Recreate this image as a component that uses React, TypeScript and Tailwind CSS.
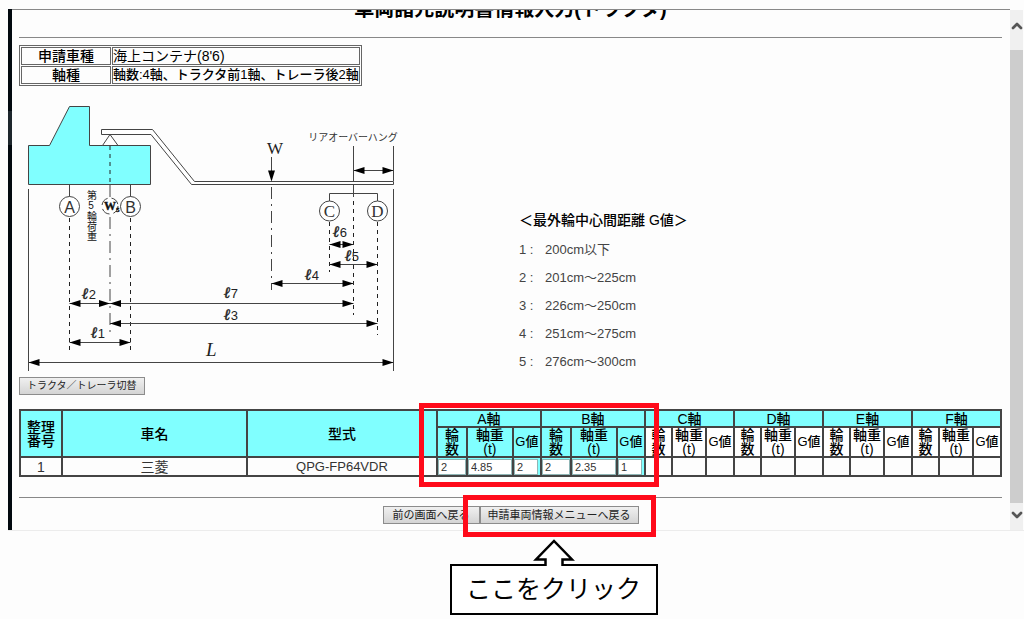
import { ChevronDown, ChevronUp } from "lucide-react";

const axles = [
  { name: "A", wheels: "2", weight: "4.85", g: "2", active: true },
  { name: "B", wheels: "2", weight: "2.35", g: "1", active: true },
  { name: "C", active: false },
  { name: "D", active: false },
  { name: "E", active: false },
  { name: "F", active: false },
];

const gValues = [
  { no: "1", range: "200cm以下" },
  { no: "2", range: "201cm～225cm" },
  { no: "3", range: "226cm～250cm" },
  { no: "4", range: "251cm～275cm" },
  { no: "5", range: "276cm～300cm" },
];

const buttonClass =
  "h-[18px] border border-[#8c8c8c] bg-gradient-to-b from-[#f0f0f0] to-[#d4d4d4] leading-none text-[#222] whitespace-nowrap";

// Horizontal dimension line with an arrowhead at both ends
function Dimension({ x1, x2, y }: { x1: number; x2: number; y: number }) {
  return (
    <g>
      <path d={`M${x1} ${y}H${x2}`} stroke="#444" />
      <path d={`M${x1} ${y}l11 -3.5v7zM${x2} ${y}l-11 -3.5v7z`} fill="#000" stroke="none" />
    </g>
  );
}

function Length({ x, y, n }: { x: number; y: number; n: string }) {
  return (
    <text x={x} y={y} fill="#222" stroke="none">
      <tspan fontFamily="DejaVu Serif, serif" fontStyle="italic" fontWeight="bold" fontSize="16" stroke="#222" strokeWidth="0.4">ℓ</tspan>
      <tspan fontSize="13">{n}</tspan>
    </text>
  );
}

function Axle({ x, y, name, serif }: { x: number; y: number; name: string; serif?: boolean }) {
  return (
    <g>
      <circle cx={x} cy={y} r="10" fill="#fff" stroke="#444" />
      <text
        x={x}
        y={y + 6}
        textAnchor="middle"
        fontFamily={serif ? "Liberation Serif, serif" : "Liberation Sans, sans-serif"}
        fontSize={serif ? 17 : 16}
        fill="#333"
        stroke="none"
      >
        {name}
      </text>
    </g>
  );
}

function TractorDiagram() {
  return (
    <svg viewBox="19 100 390 277" className="w-[390px] h-[277px] shrink-0" fill="none" stroke="#444" role="img" aria-label="トラクタ">
      {/* Tractor */}
      <path d="M28.5 184.5V145.5H49.5L69.5 106.5H89.5V145.5H150.5V184.5Z" fill="#80ffff" />
      <path d="M110 134.5L102.5 145.5H118L110 134.5Z" fill="#fff" />
      {/* Trailer frame */}
      <path d="M101.5 129.5H152.5L194.5 181.5H393.5V184.5H191.5L151 134.5H101.5Z" fill="#fff" />

      {/* Solid verticals */}
      <path d="M28.5 189V371M393.5 189V371M69.5 185V197M130.5 185V197M353.5 146V181M393.5 146V181M353.5 185V197M329.5 201V193.5H377.5V201" />
      {/* Dashed verticals */}
      <path
        d="M110 146V184M69.5 218V351M130.5 218V351M329.5 222V272M377.5 222V335M353.5 201V315"
        stroke="#222"
        strokeDasharray="4 4"
      />
      <path d="M110 185V197M110 217V335M271.5 187V290" strokeDasharray="12 5 2 5" />

      {/* Fifth wheel load */}
      <circle cx="110" cy="206" r="8" strokeDasharray="9 4" fill="#fff" />
      <text x="104" y="210" fontFamily="Liberation Serif, serif" fontSize="12" fontWeight="bold" fill="#111" stroke="#111" strokeWidth="0.4">
        W<tspan fontSize="7" dy="2">5</tspan>
      </text>
      <text
        x="91"
        y="190"
        fontSize="10"
        fill="#111"
        stroke="none"
        style={{ writingMode: "vertical-rl", textOrientation: "upright" }}
      >
        第5輪荷重
      </text>

      <Axle x={69.5} y={206.5} name="A" />
      <Axle x={130.5} y={206.5} name="B" />
      <Axle x={329.5} y={211} name="C" serif />
      <Axle x={377.5} y={211} name="D" serif />

      <text x="275" y="154" textAnchor="middle" fontFamily="Liberation Serif, serif" fontSize="17" fill="#222" stroke="none">W</text>
      <path d="M271.5 157V175" />
      <path d="M271.5 181.5l-3.5 -11h7z" fill="#000" stroke="none" />

      <text x="353" y="141" textAnchor="middle" fontSize="10" fill="#333" stroke="none">リアオーバーハング</text>

      <Dimension x1={353.5} x2={393.5} y={170.5} />
      <Dimension x1={329.5} x2={353.5} y={244.5} />
      <Dimension x1={329.5} x2={377.5} y={264.5} />
      <Dimension x1={271.5} x2={353.5} y={283.5} />
      <Dimension x1={69.5} x2={110} y={303.5} />
      <Dimension x1={110} x2={353.5} y={303.5} />
      <Dimension x1={110} x2={377.5} y={323.5} />
      <Dimension x1={69.5} x2={130.5} y={342.5} />
      <Dimension x1={28.5} x2={393.5} y={362.5} />

      <Length x={333} y={237} n="6" />
      <Length x={345} y={261} n="5" />
      <Length x={305} y={280} n="4" />
      <Length x={224} y={298} n="7" />
      <Length x={224} y={320} n="3" />
      <Length x={82} y={299} n="2" />
      <Length x={91} y={338} n="1" />
      <text x="206" y="356" fontFamily="Liberation Serif, serif" fontStyle="italic" fontSize="19" fill="#222" stroke="none">L</text>
    </svg>
  );
}

function AxleInput({ label, value }: { label: string; value: string }) {
  return (
    <input
      type="text"
      aria-label={label}
      defaultValue={value}
      className="block w-full h-4 px-[2px] bg-white border border-[#8fb5b5] text-[11px] leading-none text-[#333]"
    />
  );
}

function AxleTable() {
  const cell = "border-2 border-[#444] p-0 font-medium";
  return (
    <table className="w-full table-fixed border-collapse text-center text-[14px] leading-[14px]">
      <colgroup>
        <col className="w-[42px]" />
        <col className="w-[185px]" />
        <col />
        {axles.map((a) => [
          <col key={a.name + "1"} className={a.active ? "w-[30px]" : "w-[27px]"} />,
          <col key={a.name + "2"} className={a.active ? "w-[46px]" : "w-[34px]"} />,
          <col key={a.name + "3"} className="w-[28px]" />,
        ])}
      </colgroup>
      <thead>
        <tr className="h-[17px] bg-[#80ffff]">
          <th rowSpan={2} className={cell}>整理<br />番号</th>
          <th rowSpan={2} className={cell}>車名</th>
          <th rowSpan={2} className={cell}>型式</th>
          {axles.map((a) => (
            <th key={a.name} colSpan={3} className={cell}>{a.name}軸</th>
          ))}
        </tr>
        <tr className="h-[30px]">
          {axles.map((a) => {
            const bg = a.active ? "bg-[#80ffff]" : "bg-white";
            return [
              <th key={a.name + "1"} className={`${cell} ${bg}`}>輪<br />数</th>,
              <th key={a.name + "2"} className={`${cell} ${bg}`}>軸重<br />(t)</th>,
              <th key={a.name + "3"} className={`${cell} ${bg} text-[13px] whitespace-nowrap`}>G値</th>,
            ];
          })}
        </tr>
      </thead>
      <tbody>
        <tr className="h-[19px] text-[#333]">
          <td className="border-2 border-[#444] p-0">1</td>
          <td className="border-2 border-[#444] p-0">三菱</td>
          <td className="border-2 border-[#444] p-0 text-[13px]">QPG-FP64VDR</td>
          {axles.map((a) => {
            const td = a.active ? "border-2 border-[#444] p-0 bg-[#80ffff]" : "border-2 border-[#444] p-0";
            return [
              <td key={a.name + "1"} className={td}>{a.wheels && <AxleInput label={`${a.name}軸 輪数`} value={a.wheels} />}</td>,
              <td key={a.name + "2"} className={td}>{a.weight && <AxleInput label={`${a.name}軸 軸重`} value={a.weight} />}</td>,
              <td key={a.name + "3"} className={`${td} ${a.active ? "pr-[2px]" : ""}`}>{a.g && <AxleInput label={`${a.name}軸 G値`} value={a.g} />}</td>,
            ];
          })}
        </tr>
      </tbody>
    </table>
  );
}

export default function App() {
  return (
    <div className="min-h-screen bg-[#fdfdfd] pt-[9px] pl-2 text-black font-['Liberation_Sans','Noto_Sans_CJK_JP',sans-serif]">
      <div className="flex border-b border-[#ececec]">
        {/* Window edge */}
        <div className="w-1 shrink-0 bg-[#02090f] flex flex-col pt-[102px]">
          <div className="h-[34px] bg-[#1d262c]" />
        </div>

        <main className="flex-1 min-w-0 border-t border-[#888] pl-[7px] pr-2 pb-[6px]">
          <div className="h-[27px] overflow-hidden">
            <h1 className="-mt-[11px] text-center text-[20px] leading-5 font-bold">車両諸元説明書情報入力(トラクタ)</h1>
          </div>
          <hr className="border-[#888]" />

          <table className="mt-[7px] border-separate border-spacing-[1px] border border-[#666] text-[14px] leading-4">
            <tbody>
              <tr>
                <th className="w-[90px] border border-[#666] p-0 font-medium">申請車種</th>
                <td className="border border-[#666] p-0">海上コンテナ(8'6)</td>
              </tr>
              <tr>
                <th className="border border-[#666] p-0 font-medium">軸種</th>
                <td className="border border-[#666] p-0 text-[13px] font-medium whitespace-nowrap">軸数:4軸、トラクタ前1軸、トレーラ後2軸</td>
              </tr>
            </tbody>
          </table>

          <div className="mt-[14px] flex">
            <TractorDiagram />
            <section className="ml-[110px] pt-[112px] whitespace-nowrap">
              <h2 className="text-[14px] leading-4 font-medium">＜最外輪中心間距離 G値＞</h2>
              <ul className="mt-2 text-[13px] leading-7 text-[#444]">
                {gValues.map((g) => (
                  <li key={g.no} className="flex">
                    <span className="w-[26px]">{g.no} :</span>
                    <span>{g.range}</span>
                  </li>
                ))}
              </ul>
            </section>
          </div>

          <button type="button" className={`${buttonClass} block px-[7px] text-[10px]`}>トラクタ／トレーラ切替</button>

          <div className="relative mt-[14px]">
            <AxleTable />
            <div className="absolute -top-[6px] -bottom-[10px] right-[343px] w-[240px] border-[5px] border-[#ff0a1a] pointer-events-none" />
          </div>

          <hr className="mt-[20px] border-[#888]" />

          <div className="mt-2 flex justify-center">
            <button type="button" className={`${buttonClass} px-[9px] text-[11px]`}>前の画面へ戻る</button>
            <div className="relative">
              <button type="button" className={`${buttonClass} block px-[7px] text-[11px]`}>申請車両情報メニューへ戻る</button>
              <div className="absolute -top-[11px] -bottom-[13px] -left-[17px] -right-[17px] border-[5px] border-[#ff0a1a] pointer-events-none" />
              <div className="absolute top-[58px] -left-[30px] w-[208px] h-[51px] border-2 border-black bg-white flex items-center justify-center text-[25px] whitespace-nowrap">
                ここをクリック
                <svg viewBox="0 0 42 28" className="absolute -top-[27px] left-[81px] w-[42px] h-[28px]">
                  <path d="M12.5 27V20.5H3L21 2L39 20.5H29.5V27Z" fill="#fff" />
                  <path d="M12.5 27V20.5H3L21 2L39 20.5H29.5V27" fill="none" stroke="#000" strokeWidth="2.5" />
                </svg>
              </div>
            </div>
          </div>
        </main>

        {/* Scrollbar */}
        <div className="w-[13px] mr-px shrink-0 mt-px bg-[#f0f0f0] flex flex-col">
          <button type="button" aria-label="上へ" className="h-10 flex items-center justify-center text-[#555]">
            <ChevronUp size={16} strokeWidth={4} className="-mt-2 shrink-0" />
          </button>
          <div className="flex-1 bg-[#cdcdcd]" />
          <button type="button" aria-label="下へ" className="h-[27px] flex items-center justify-center text-[#555]">
            <ChevronDown size={16} strokeWidth={4} className="-mt-1 shrink-0" />
          </button>
        </div>
      </div>
    </div>
  );
}
